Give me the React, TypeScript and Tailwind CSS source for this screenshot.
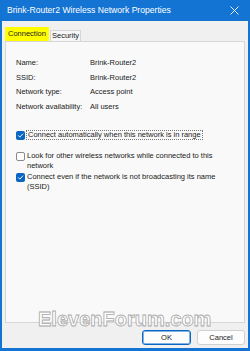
import React from 'react';

const font = "font-['Liberation_Sans',Arial,sans-serif]";

const info = [
  { label: 'Name:', value: 'Brink-Router2' },
  { label: 'SSID:', value: 'Brink-Router2' },
  { label: 'Network type:', value: 'Access point' },
  { label: 'Network availability:', value: 'All users' },
];

const Box = ({ checked }: { checked: boolean }) =>
  checked ? (
    <span className="mt-[0.5px] flex h-[9px] w-[9px] shrink-0 items-center justify-center rounded-[2px] bg-[#0a66c2]">
      <svg width="7" height="7" viewBox="0 0 10 10" fill="none">
        <path d="M2 5.2 4.1 7.3 8.2 2.8" stroke="white" strokeWidth="1.3" strokeLinecap="round" strokeLinejoin="round" />
      </svg>
    </span>
  ) : (
    <span className="mt-[0.5px] h-[9px] w-[9px] shrink-0 rounded-[2px] border border-[#8a8a8a] bg-white" />
  );

export default function App() {
  return (
    <div className={`relative h-[351px] w-[250px] overflow-hidden border-x-2 border-b-[3px] border-[#1474d4] bg-[#f0f0f0] text-[#1a1a1a] ${font}`}>
      {/* title bar */}
      <div className="-mx-[2px] flex h-[21px] items-center justify-between bg-[#1474d4] pl-[7px] pr-[8px] text-white">
        <span className="text-[8.6px] leading-none">Brink-Router2 Wireless Network Properties</span>
        <svg width="9" height="9" viewBox="0 0 9 9" className="mr-[3px]">
          <path d="M0.5 0.5 8.5 8.5M8.5 0.5 0.5 8.5" stroke="white" strokeWidth="0.9" />
        </svg>
      </div>

      {/* tabs */}
      <div className="flex items-end pl-[3px] pt-[6px] text-[7.5px] leading-none">
        <div className="flex h-[14px] w-[44px] items-center justify-center bg-[#ffff00]">Connection</div>
        <div className="ml-px flex h-[11px] w-[31px] items-center justify-center border border-b-0 border-[#d6d6d6] bg-[#f7f7f7]">Security</div>
      </div>

      {/* panel */}
      <div className="ml-[3px] mr-[3px] h-[282px] border border-[#d6d6d6] bg-[#f9f9f9] pl-[10px] pt-[13px] text-[7.5px]">
        <div className="flex flex-col">
          {info.map((row) => (
            <div key={row.label} className="flex h-[14.8px] items-center">
              <span className="w-[74px]">{row.label}</span>
              <span>{row.value}</span>
            </div>
          ))}
        </div>

        <div className="mt-[16px] flex flex-col leading-[9.6px]">
          <div className="flex items-start">
            <Box checked />
            <span className="ml-px whitespace-nowrap border border-dotted border-[#777] px-px leading-[8px]">
              Connect automatically when this network is in range
            </span>
          </div>
          <div className="mt-[11px] flex items-start">
            <Box checked={false} />
            <span className="ml-[2px] whitespace-nowrap">
              Look for other wireless networks while connected to this
              <br />
              network
            </span>
          </div>
          <div className="mt-[2px] flex items-start">
            <Box checked />
            <span className="ml-[2px] whitespace-nowrap">
              Connect even if the network is not broadcasting its name
              <br />
              (SSID)
            </span>
          </div>
        </div>
      </div>

      {/* buttons */}
      <div className="flex justify-end gap-[6px] pr-[3px] pt-[7px] text-[7.5px]">
        <button className="h-[15px] w-[49px] rounded-[3px] border border-[#0a66c2] bg-[#fdfdfd] shadow-[inset_0_0_0_1px_#7fb2e5]">OK</button>
        <button className="h-[15px] w-[48px] rounded-[3px] border border-[#d0d0d0] bg-[#fdfdfd]">Cancel</button>
      </div>

      {/* watermark */}
      <div className="pointer-events-none absolute left-[36px] top-[309px] text-[20px] font-bold leading-none text-white [-webkit-text-stroke:0.8px_#a8a8a8]">
        ElevenForum.com
      </div>
    </div>
  );
}
